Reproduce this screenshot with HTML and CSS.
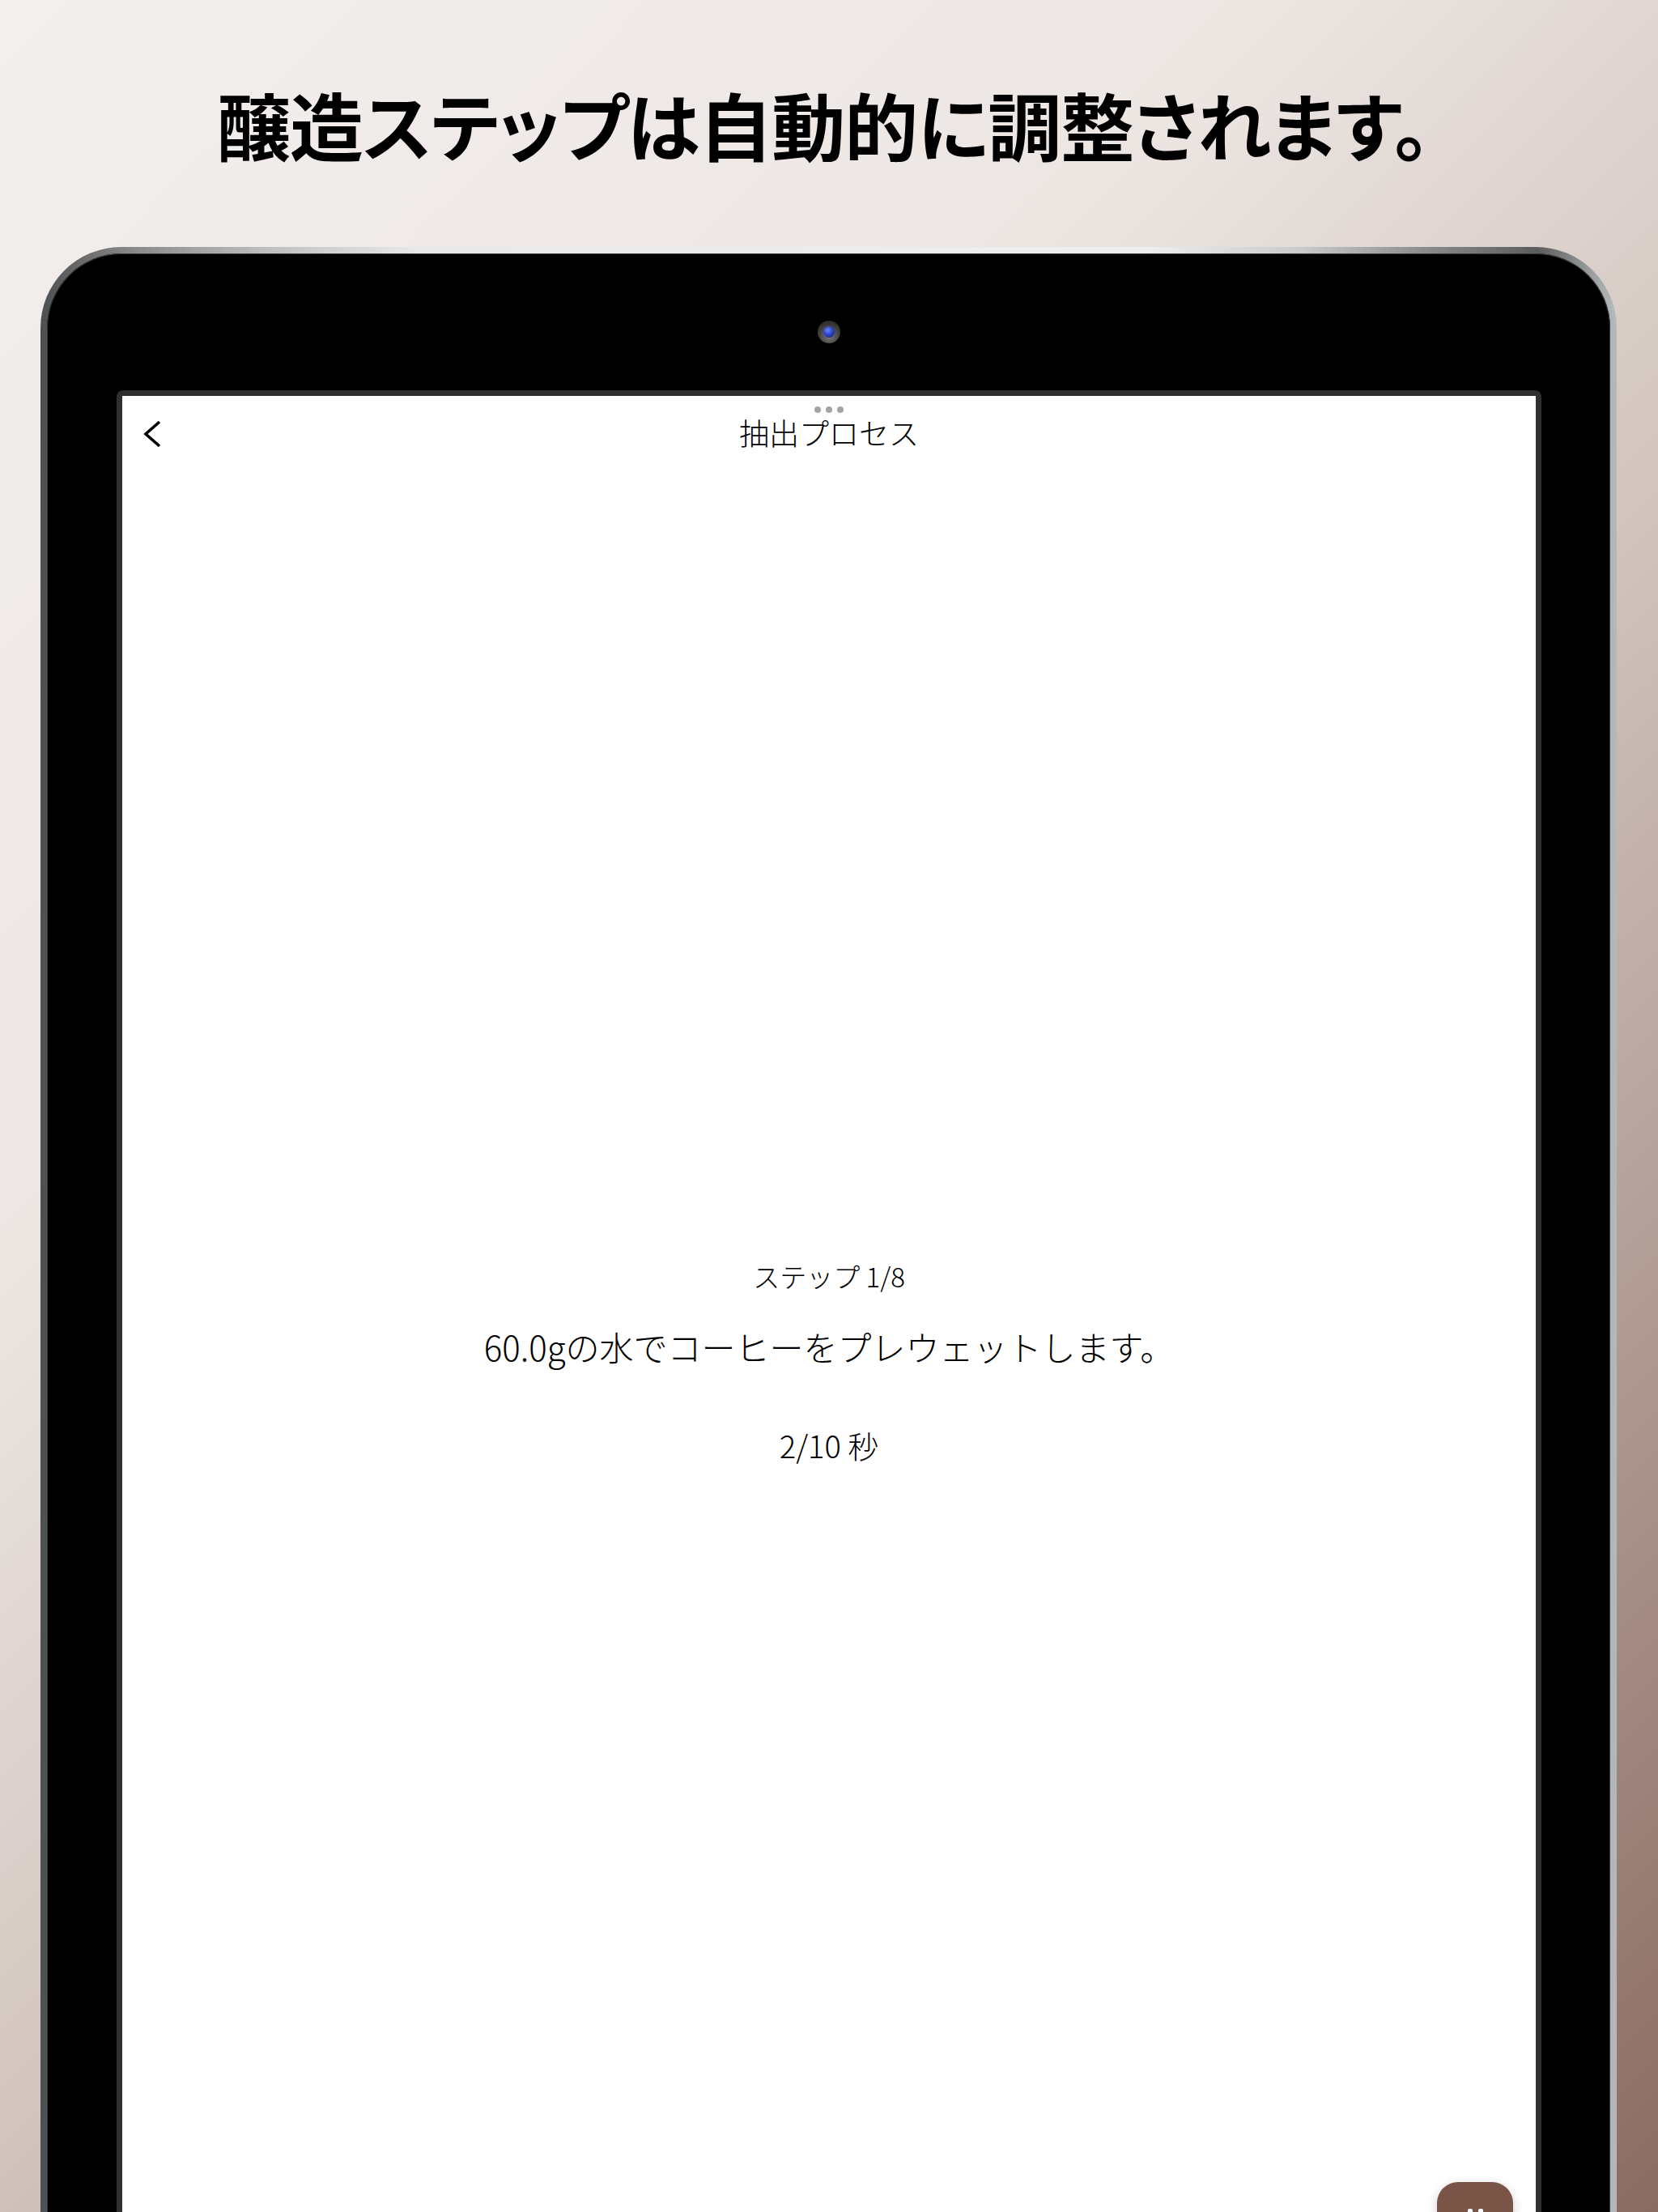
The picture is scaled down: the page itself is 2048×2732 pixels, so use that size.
FILE: index.html
```html
<!DOCTYPE html>
<html lang="ja">
<head>
<meta charset="utf-8">
<title>抽出プロセス</title>
<link rel="stylesheet" href="styles.css">
</head>
<body>
<div class="page">
  <h1 class="headline">醸造ステップは自動的に調整されます。</h1>
  <div class="device">
    <div class="bezel">
      <div class="camera-row"><div class="camera"><div class="lens"></div></div></div>
      <div class="screen-frame">
        <div class="screen">
          <div class="grabber"><span></span><span></span><span></span></div>
          <div class="navbar">
            <div class="nav-left">
              <svg class="back" width="24" height="36" viewBox="0 0 24 36"><path d="M21 3 L4 18 L21 33" fill="none" stroke="#000" stroke-width="3.6" stroke-linecap="butt" stroke-linejoin="miter"/></svg>
            </div>
            <div class="nav-title">抽出プロセス</div>
            <div class="nav-right"></div>
          </div>
          <div class="step">
            <div class="step-count">ステップ 1/8</div>
            <div class="step-text">60.0gの水でコーヒーをプレウェットします。</div>
            <div class="step-timer">2/10 秒</div>
          </div>
          <div class="fab"><span class="bar"></span><span class="bar"></span></div>
        </div>
      </div>
    </div>
  </div>
</div>
</body>
</html>
```
FILE: styles.css
```css
html, body {
  margin: 0;
  padding: 0;
}
body {
  width: 2048px;
  height: 2732px;
  overflow: hidden;
  font-family: "Noto Sans CJK JP", "Noto Sans", sans-serif;
}
.page {
  width: 2048px;
  height: 2732px;
  overflow: hidden;
  background: linear-gradient(135deg, #f3efec 0%, #ede7e4 32%, #d3c5bf 55%, #b29e97 75%, #8a6b61 100%);
}
.headline {
  margin: 0;
  height: 305px;
  display: flex;
  align-items: center;
  justify-content: center;
  padding-right: 14px;
  box-sizing: border-box;
  font-size: 91px;
  line-height: 1;
  font-weight: 700;
  color: #000;
  font-feature-settings: "palt";
  letter-spacing: -1px;
}
.device {
  margin: 0 51px 0 50px;
  height: 2600px;
  padding: 8px;
  border-radius: 100px;
  background: linear-gradient(to right, #4b4f51 0%, #6e6e6e 3%, #8a8a8a 6%, #bdbdbd 14%, #e8eaea 24%, #eef0f0 70%, #c9cbcb 80%, #8a8a8a 88%, #5c5c5c 95%, #aeb4b6 99.5%, #b4babc 100%);
  box-sizing: border-box;
}
.bezel {
  height: 100%;
  background: #000;
  border-radius: 92px;
  padding: 0 85px 0 86px;
  box-sizing: border-box;
  box-shadow: inset 0 0 0 1px #3a3a3a;
}
.camera-row {
  display: flex;
  justify-content: center;
  padding-top: 83px;
  height: 86px;
}
.camera {
  width: 28px;
  height: 28px;
  border-radius: 50%;
  background: radial-gradient(circle at 50% 70%, #777 0%, #3a3a3a 60%, #1c1c1c 100%);
  display: flex;
  align-items: center;
  justify-content: center;
}
.lens {
  width: 14px;
  height: 14px;
  border-radius: 50%;
  background: radial-gradient(circle at 40% 35%, #6b86ff 0%, #2b45c8 45%, #101a60 100%);
}
.screen-frame {
  background: #2f2f2f;
  padding: 7px 7px 0 7px;
  border-radius: 8px 8px 0 0;
}
.screen {
  position: relative;
  height: 2328px;
  background: #fff;
  display: flex;
  flex-direction: column;
}
.grabber {
  display: flex;
  justify-content: center;
  gap: 6px;
  padding-top: 13px;
}
.grabber span {
  width: 8px;
  height: 8px;
  border-radius: 50%;
  background: #a3a3a3;
}
.navbar {
  height: 52px;
  display: grid;
  grid-template-columns: 1fr auto 1fr;
  align-items: center;
}
.nav-left {
  padding-left: 25px;
  display: flex;
  align-items: center;
}
.back {
  display: block;
}
.nav-title {
  font-size: 37px;
  line-height: 52px;
  color: #000;
  font-weight: 300;
  margin-top: -4px;
}
.step {
  margin-top: 991px;
  display: flex;
  flex-direction: column;
  align-items: center;
  color: #000;
  font-weight: 300;
}
.step-count {
  font-size: 33px;
  line-height: 46px;
}
.step-text {
  margin-top: 35px;
  font-size: 42px;
  line-height: 58px;
}
.step-timer {
  margin-top: 67px;
  font-size: 38px;
  line-height: 52px;
}
.fab {
  position: absolute;
  top: 2206px;
  right: 28px;
  width: 94px;
  height: 94px;
  border-radius: 26px;
  background: #7a5547;
  box-shadow: 0 4px 14px rgba(0, 0, 0, 0.18);
  display: flex;
  align-items: center;
  justify-content: center;
  gap: 7px;
}
.fab .bar {
  width: 6px;
  height: 28px;
  border-radius: 2px;
  background: #fff;
}
```
